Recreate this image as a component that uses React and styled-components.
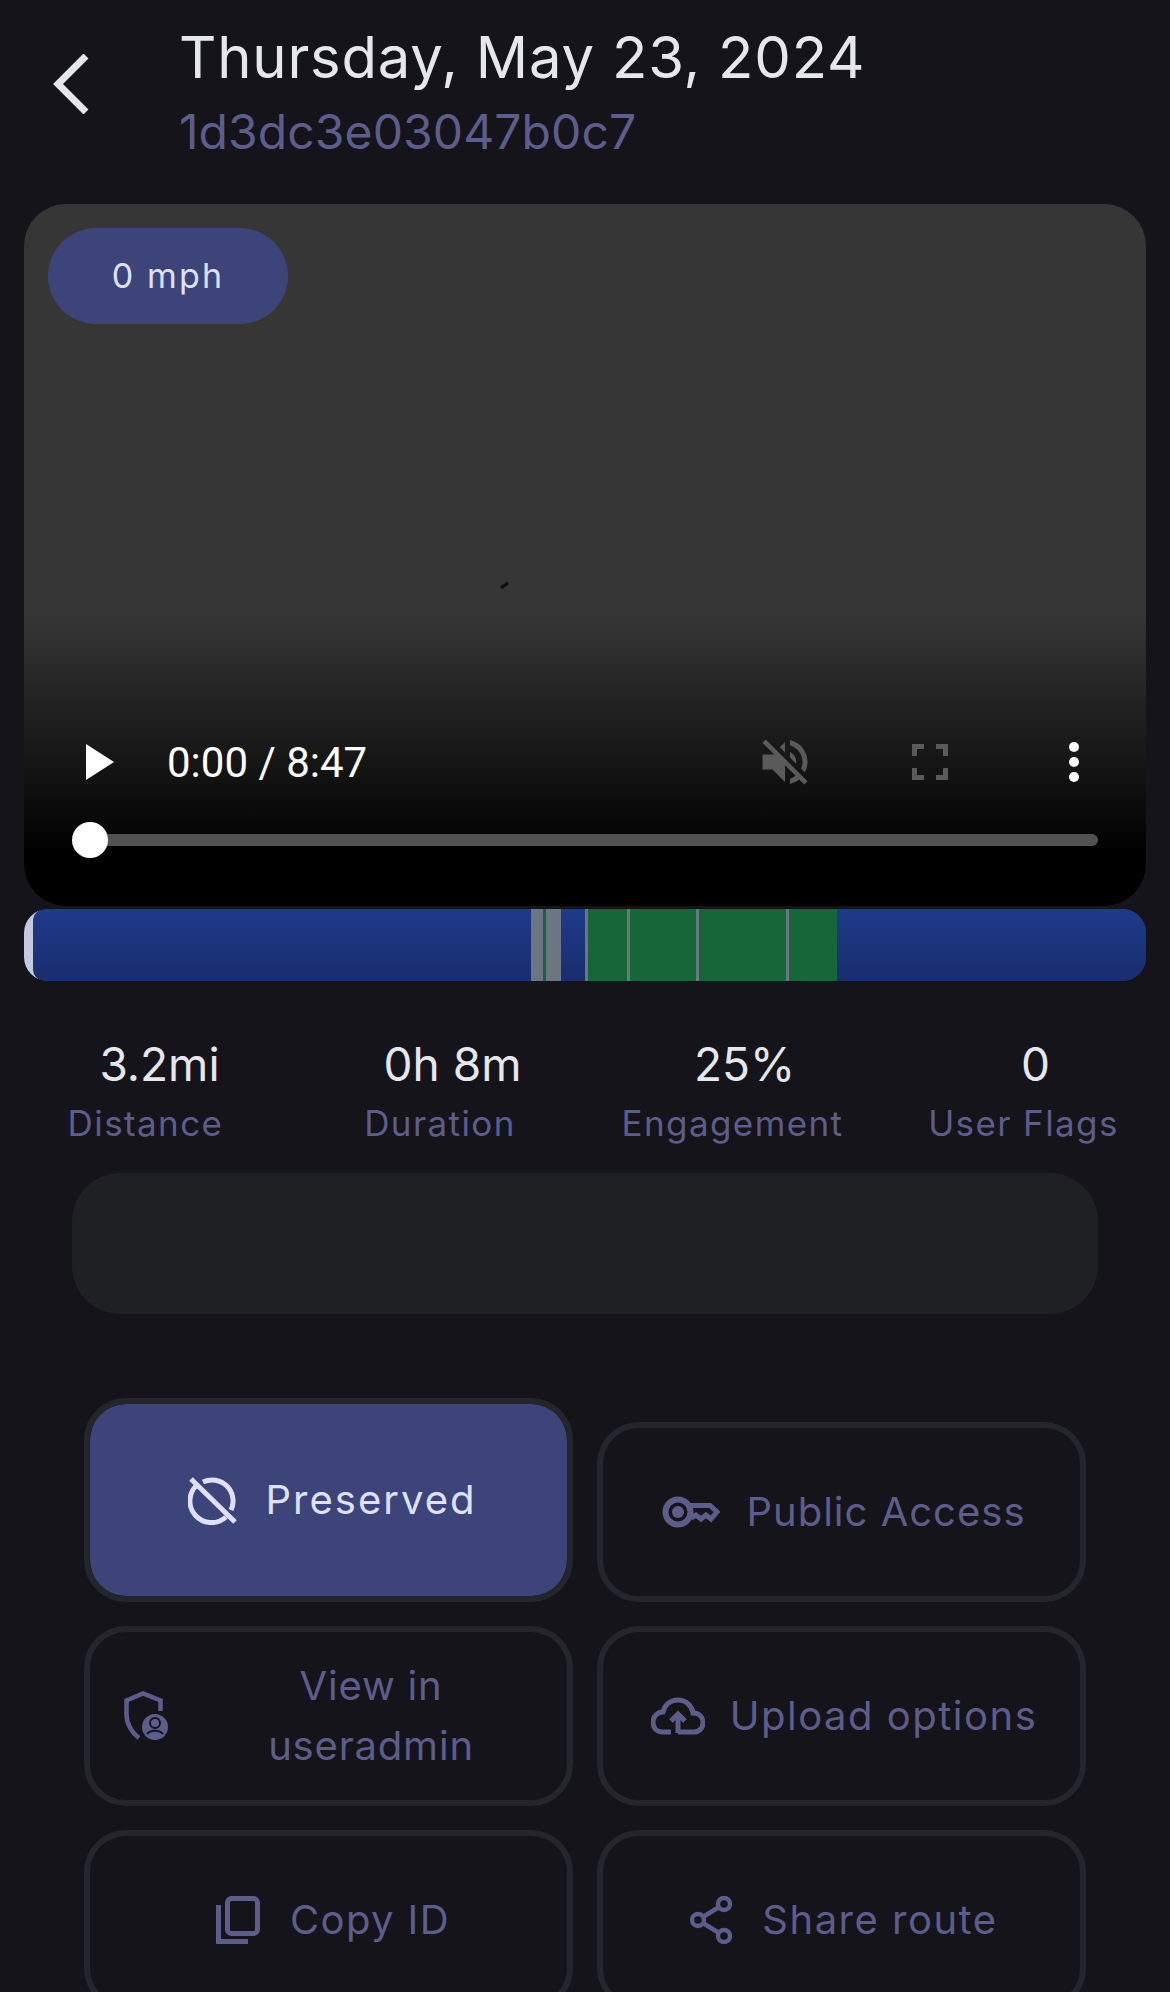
import styled, { createGlobalStyle } from "styled-components";

const GlobalStyle = createGlobalStyle`
  html, body {
    margin: 0;
    padding: 0;
    background: #14141a;
    overflow: hidden;
  }
  * {
    box-sizing: border-box;
  }
`;

const Page = styled.div`
  width: 1170px;
  height: 1992px;
  overflow: hidden;
  background: #14141a;
  font-family: Inter, "Noto Sans", sans-serif;
  font-weight: 400;
  padding: 0 24px;
`;

const Header = styled.header`
  display: flex;
  height: 204px;
  margin: 0 -24px;
  padding: 21px 0 0 53px;
`;

const BackButton = styled.div`
  width: 126px;
  padding-top: 33px;
  svg {
    display: block;
  }
`;

const Title = styled.div`
  color: #e6e6ed;
  font-size: 58px;
  line-height: 72px;
  letter-spacing: 0.8px;
  margin-bottom: 9px;
`;

const RouteId = styled.div`
  color: #5d5d8c;
  font-size: 48px;
  line-height: 60px;
  letter-spacing: 0.1px;
`;

const Video = styled.section`
  position: relative;
  height: 702px;
  border-radius: 42px;
  overflow: hidden;
  background: linear-gradient(
    180deg,
    #363636 0,
    #363636 410px,
    #262626 480px,
    #131313 570px,
    #000 650px
  );
  display: flex;
  flex-direction: column;
  justify-content: flex-end;
`;

const SpeedPill = styled.div`
  position: absolute;
  top: 24px;
  left: 24px;
  width: 240px;
  height: 96px;
  border-radius: 48px;
  background: #3d4479;
  color: #dfe1fb;
  font-size: 34px;
  letter-spacing: 2.2px;
  padding-bottom: 2px;
  display: flex;
  align-items: center;
  justify-content: center;
`;

const Tick = styled.svg`
  position: absolute;
  left: 476px;
  top: 377px;
`;

const ControlRow = styled.div`
  display: flex;
  align-items: center;
  height: 48px;
  padding: 0 67px 0 62px;
`;

const Time = styled.span`
  font-family: Roboto, sans-serif;
  color: #fff;
  font-size: 42px;
  margin-left: 53px;
  flex: 1;
`;

const ControlIcon = styled.svg`
  display: block;
  flex: none;
  margin-left: ${(p) => p.$gap || 0}px;
`;

const Track = styled.div`
  position: relative;
  height: 12px;
  margin: 48px 48px 60px 64px;
  border-radius: 6px;
  background: #525252;
`;

const Thumb = styled.div`
  position: absolute;
  left: -16px;
  top: -12px;
  width: 36px;
  height: 36px;
  border-radius: 50%;
  background: #fff;
`;

const Timeline = styled.div`
  display: flex;
  height: 72px;
  margin-top: 3px;
  border-radius: 24px;
  overflow: hidden;
  background: linear-gradient(90deg, #c3c9df 0 14px, #1e3a8a 14px);
`;

const TimelineFill = styled.div`
  display: flex;
  flex: 1;
  margin-left: 9px;
  border-radius: 12px 0 0 12px;
  background: linear-gradient(180deg, #1e3a8a, #192e6e);
`;

const Segment = styled.div`
  flex: none;
  width: ${(p) => p.$w}px;
  background: ${(p) => p.$c};
`;

const Stats = styled.div`
  display: grid;
  grid-template-columns: 291px 291px 291px 291px;
  margin: 0 -21px;
  padding-top: 53px;
  height: 192px;
`;

const Stat = styled.div`
  display: flex;
  flex-direction: column;
  align-items: center;
`;

const StatValue = styled.div`
  color: #e6e6ed;
  font-size: 46px;
  line-height: 60px;
  transform: translateX(${(p) => p.$shift}px);
`;

const StatLabel = styled.div`
  color: #5d5d8c;
  font-size: 35px;
  line-height: 58px;
  letter-spacing: 1.4px;
  transform: translateX(${(p) => p.$shift}px);
`;

const Panel = styled.div`
  height: 141px;
  margin: 0 48px;
  border-radius: 48px;
  background: #1e2024;
`;

const Actions = styled.div`
  display: grid;
  grid-template-columns: 489px 489px;
  grid-auto-rows: 180px;
  gap: 24px;
  margin: 108px 60px 0;
`;

const Action = styled.div`
  display: flex;
  align-items: center;
  justify-content: center;
  gap: ${(p) => p.$gap || 26}px;
  border: 6px solid #24252d;
  border-radius: 42px;
  padding-left: ${(p) => p.$pad || 5}px;
  color: #5d5d8c;
  font-size: 40px;
  line-height: 60px;
  letter-spacing: ${(p) => p.$ls || 1}px;
  text-align: center;
  svg {
    display: block;
    flex: none;
  }
`;

const PreservedAction = styled(Action)`
  height: 204px;
  margin-top: -24px;
  color: #dfe1fb;
  background: #3d4479 padding-box;
`;

const WrapLabel = styled.span`
  flex: 1;
  padding-right: 9px;
`;

const UserAction = styled(Action)`
  justify-content: flex-start;
  gap: 16px;
`;

const segments = [
  [498, "transparent"],
  [12, "#6e7582"],
  [3, "#17663a"],
  [15, "#6e7582"],
  [24, "transparent"],
  [3, "#6e7582"],
  [39, "#17663a"],
  [3, "#6e7582"],
  [66, "#17663a"],
  [3, "#6e7582"],
  [87, "#17663a"],
  [3, "#6e7582"],
  [48, "#17663a"],
];

function BackIcon() {
  return (
    <svg width="36" height="60" viewBox="0 0 36 60" fill="none">
      <path d="M33 2 L5 30 L33 58" stroke="#e6e6ed" strokeWidth="7" />
    </svg>
  );
}

function PreservedIcon() {
  return (
    <svg width="50" height="50" viewBox="0 0 50 50" fill="none" stroke="#dfe1fb" strokeWidth="5">
      <path d="M9 10 A21 21 0 1 0 38 42" />
      <path d="M15 7 A21 21 0 0 1 43 35" />
      <path d="M3 4 L47 47" />
    </svg>
  );
}

function KeyIcon() {
  return (
    <svg width="58" height="32" viewBox="0 0 58 32" fill="none">
      <circle cx="16" cy="16" r="12.5" stroke="#5d5d8c" strokeWidth="6" />
      <circle cx="16" cy="16" r="6" fill="#5d5d8c" />
      <path
        d="M27 9.5 H48 L55 16 L49 23 L44 19 L39 23 L34 19 L29 22"
        stroke="#5d5d8c"
        strokeWidth="5"
      />
    </svg>
  );
}

function ShieldUserIcon() {
  return (
    <svg width="44" height="50" viewBox="0 0 44 50" fill="none" stroke="#5d5d8c" strokeWidth="4.5">
      <path d="M36.5 20 V9.5 L19 2.5 L2.5 9.5 V23 C2.5 33 8 42 15 47" />
      <circle cx="31" cy="36" r="13" fill="#5d5d8c" stroke="none" />
      <circle cx="31" cy="32" r="5" stroke="#14141a" strokeWidth="2" />
      <path d="M23 43 C26 38.5 36 38.5 39 43" stroke="#14141a" strokeWidth="2" />
    </svg>
  );
}

function UploadIcon() {
  return (
    <svg width="54" height="38" viewBox="0 0 54 38" fill="none" stroke="#5d5d8c" strokeWidth="5">
      <path d="M20 35 H12 C5 35 2 30 2 25 C2 19 7 15 12 15 C14 7 20 3 27 3 C35 3 41 9 42 16 C48 16 52 20 52 26 C52 31 48 35 43 35 H27" />
      <path d="M27 36 V19" />
      <path d="M20 24 L27 17 L34 24" />
    </svg>
  );
}

function CopyIcon() {
  return (
    <svg width="44" height="48" viewBox="0 0 44 48" fill="none" stroke="#5d5d8c" strokeWidth="5">
      <rect x="11.5" y="2.5" width="30" height="35" rx="4" />
      <path d="M2.5 9 V45.5 H32" />
    </svg>
  );
}

function ShareIcon() {
  return (
    <svg width="42" height="48" viewBox="0 0 42 48" fill="none" stroke="#5d5d8c" strokeWidth="4.5">
      <circle cx="34" cy="8" r="6" />
      <circle cx="8" cy="24" r="6" />
      <circle cx="34" cy="40" r="6" />
      <path d="M13 21 L29 11 M13 27 L29 37" />
    </svg>
  );
}

export default function App() {
  return (
    <Page>
      <GlobalStyle />
      <Header>
        <BackButton>
          <BackIcon />
        </BackButton>
        <div>
          <Title>Thursday, May 23, 2024</Title>
          <RouteId>1d3dc3e03047b0c7</RouteId>
        </div>
      </Header>

      <Video>
        <SpeedPill>0 mph</SpeedPill>
        <Tick width="10" height="8" viewBox="0 0 10 8">
          <path d="M1 7 L8 2" stroke="#0c0c0c" strokeWidth="3" />
        </Tick>
        <ControlRow>
          <ControlIcon width="28" height="36" viewBox="0 0 28 36">
            <path d="M0 0 L28 18 L0 36 Z" fill="#fff" />
          </ControlIcon>
          <Time>0:00 / 8:47</Time>
          <ControlIcon width="60" height="60" viewBox="0 0 24 24">
            <path
              d="M16.5 12A4.5 4.5 0 0 0 14 8v2.2l2.45 2.45c.03-.2.05-.43.05-.65zM19 12c0 .94-.2 1.82-.54 2.64l1.51 1.51A8.8 8.8 0 0 0 21 12c0-4.28-3-7.86-7-8.77v2.06c2.89.86 5 3.54 5 6.71zM4.27 3 3 4.27 7.73 9H3v6h4l5 5v-6.73l4.25 4.25c-.67.52-1.42.93-2.25 1.18v2.06a8.99 8.99 0 0 0 3.69-1.81L19.73 21 21 19.73l-9-9L4.27 3zM12 4 9.91 6.09 12 8.18V4z"
              fill="#5a5a5a"
            />
          </ControlIcon>
          <ControlIcon $gap={97} width="36" height="36" viewBox="0 0 36 36">
            <path
              d="M0 12 V0 H12 V5 H5 V12 Z M24 0 H36 V12 H31 V5 H24 Z M0 24 H5 V31 H12 V36 H0 Z M31 24 H36 V36 H24 V31 H31 Z"
              fill="#5a5a5a"
            />
          </ControlIcon>
          <ControlIcon $gap={121} width="10" height="40" viewBox="0 0 10 40">
            <circle cx="5" cy="5" r="5" fill="#fff" />
            <circle cx="5" cy="20" r="5" fill="#fff" />
            <circle cx="5" cy="35" r="5" fill="#fff" />
          </ControlIcon>
        </ControlRow>
        <Track>
          <Thumb />
        </Track>
      </Video>

      <Timeline>
        <TimelineFill>
          {segments.map(([w, c], i) => (
            <Segment key={i} $w={w} $c={c} />
          ))}
        </TimelineFill>
      </Timeline>

      <Stats>
        <Stat>
          <StatValue $shift={11}>3.2mi</StatValue>
          <StatLabel $shift={-3}>Distance</StatLabel>
        </Stat>
        <Stat>
          <StatValue $shift={13}>0h 8m</StatValue>
          <StatLabel $shift={0.5}>Duration</StatLabel>
        </Stat>
        <Stat>
          <StatValue $shift={14}>25%</StatValue>
          <StatLabel $shift={2}>Engagement</StatLabel>
        </Stat>
        <Stat>
          <StatValue $shift={14}>0</StatValue>
          <StatLabel $shift={2}>User Flags</StatLabel>
        </Stat>
      </Stats>

      <Panel />

      <Actions>
        <PreservedAction $gap={28} $pad={7} $ls={2}>
          <PreservedIcon />
          Preserved
        </PreservedAction>
        <Action>
          <KeyIcon />
          Public Access
        </Action>
        <UserAction $pad={34} $ls={0.8}>
          <ShieldUserIcon />
          <WrapLabel>
            View in
            <br />
            useradmin
          </WrapLabel>
        </UserAction>
        <Action $gap={25} $ls={1.5}>
          <UploadIcon />
          Upload options
        </Action>
        <Action $gap={30} $pad={9} $ls={1.4}>
          <CopyIcon />
          Copy ID
        </Action>
        <Action $gap={30} $ls={1.5}>
          <ShareIcon />
          Share route
        </Action>
      </Actions>
    </Page>
  );
}
